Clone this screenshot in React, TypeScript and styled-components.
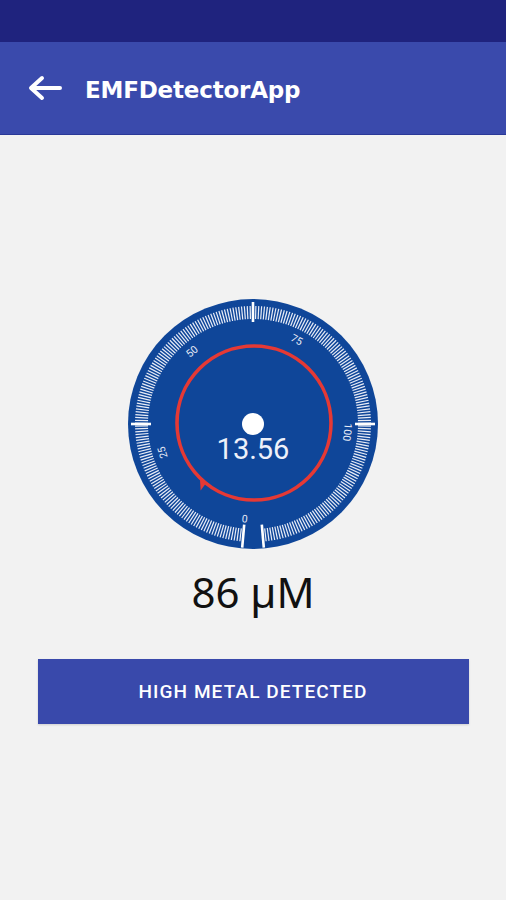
import React from "react";
import styled, { createGlobalStyle } from "styled-components";

const GlobalStyle = createGlobalStyle`
  html, body {
    margin: 0;
    padding: 0;
    background: #f2f2f2;
  }
  * {
    box-sizing: border-box;
  }
`;

const CX = 125;
const CY = 125;
const START = 185;
const DEG_PER_UNIT = 2.7;
const END = 535;
const VALUE = 13.56;

const angleOf = (v: number) => START + v * DEG_PER_UNIT;

const Gauge = () => {
  const ticks: number[] = [];
  for (let a = START; a <= END + 0.01; a += 1.4) ticks.push(a);
  const majors = [270, 360, 450];
  const labels = [0, 25, 50, 75, 100];
  const pointer = angleOf(VALUE);

  return (
    <GaugeSvg viewBox="0 0 250 250" width={250} height={250}>
      <circle cx={CX} cy={CY} r={125} fill="#0f4699" />
      <g stroke="#e9edf7" strokeWidth={1.2}>
        {ticks.map((a, i) => (
          <line
            key={i}
            x1={CX}
            y1={CY - 105}
            x2={CX}
            y2={CY - 118}
            transform={`rotate(${a} ${CX} ${CY})`}
          />
        ))}
      </g>
      <g stroke="#ffffff" strokeWidth={2.6}>
        {majors.map((a) => (
          <line
            key={a}
            x1={CX}
            y1={CY - 102}
            x2={CX}
            y2={CY - 122}
            transform={`rotate(${a} ${CX} ${CY})`}
          />
        ))}
        {[START, END].map((a) => (
          <line
            key={a}
            x1={CX}
            y1={CY - 101}
            x2={CX}
            y2={CY - 124}
            transform={`rotate(${a} ${CX} ${CY})`}
          />
        ))}
      </g>
      <g fill="#e9edf7" fontSize={10.5} fontFamily="Roboto, sans-serif">
        {labels.map((v) => (
          <text
            key={v}
            x={CX}
            y={CY - 94}
            textAnchor="middle"
            dominantBaseline="middle"
            transform={`rotate(${angleOf(v)} ${CX} ${CY})`}
          >
            {v}
          </text>
        ))}
      </g>
      <circle
        cx={CX + 1}
        cy={CY - 1}
        r={77}
        fill="none"
        stroke="#e53935"
        strokeWidth={3.6}
      />
      <polygon
        points={`${CX + 1 - 4},${CY - 1 - 76} ${CX + 1 + 5},${CY - 1 - 76} ${CX + 1 - 5},${CY - 1 - 86}`}
        fill="#e53935"
        transform={`rotate(${pointer} ${CX + 1} ${CY - 1})`}
      />
      <circle cx={CX} cy={CY} r={11} fill="#ffffff" />
      <text
        x={CX}
        y={CY + 35}
        textAnchor="middle"
        fill="#eef1fa"
        fontSize={29}
        fontFamily="Roboto, sans-serif"
      >
        {VALUE.toFixed(2)}
      </text>
    </GaugeSvg>
  );
};

const BackArrow = () => (
  <svg width="36" height="26" viewBox="0 0 36 26">
    <path
      d="M33 13 H5 M15 3 L4 13 L15 23"
      fill="none"
      stroke="#ffffff"
      strokeWidth={4}
      strokeLinecap="round"
      strokeLinejoin="round"
    />
  </svg>
);

export default function App() {
  return (
    <Screen>
      <GlobalStyle />
      <StatusBar />
      <AppBar>
        <BackButton>
          <BackArrow />
        </BackButton>
        <Title>EMFDetectorApp</Title>
      </AppBar>
      <Content>
        <Gauge />
        <Reading>86 µM</Reading>
        <AlertButton>HIGH METAL DETECTED</AlertButton>
      </Content>
    </Screen>
  );
}

const Screen = styled.div`
  width: 506px;
  min-height: 900px;
  background: #f2f2f2;
  display: flex;
  flex-direction: column;
`;

const StatusBar = styled.div`
  height: 42px;
  background: #1f237e;
`;

const AppBar = styled.div`
  height: 93px;
  background: #3a4aac;
  border-bottom: 1px solid #2a3897;
  display: flex;
  align-items: center;
  padding-left: 27px;
  gap: 22px;
`;

const BackButton = styled.div`
  display: flex;
  align-items: center;
  height: 26px;
`;

const Title = styled.h1`
  margin: 0;
  padding-top: 3px;
  color: #ffffff;
  font-family: "DejaVu Sans", "Liberation Sans", sans-serif;
  font-weight: 700;
  font-size: 23px;
  letter-spacing: -0.2px;
`;

const Content = styled.div`
  display: flex;
  flex-direction: column;
  align-items: center;
  padding-top: 164px;
`;

const GaugeSvg = styled.svg`
  display: block;
`;

const Reading = styled.div`
  margin-top: 16px;
  font-family: "Noto Sans", sans-serif;
  font-weight: 400;
  font-size: 42px;
  line-height: 54px;
  color: #111111;
`;

const AlertButton = styled.div`
  margin-top: 40px;
  width: 431px;
  height: 65px;
  background: #3949ab;
  color: #ffffff;
  display: flex;
  align-items: center;
  justify-content: center;
  font-family: Roboto, sans-serif;
  font-weight: 500;
  font-size: 19px;
  letter-spacing: 1.1px;
  box-shadow: 0 1px 2px rgba(0, 0, 0, 0.15);
`;
